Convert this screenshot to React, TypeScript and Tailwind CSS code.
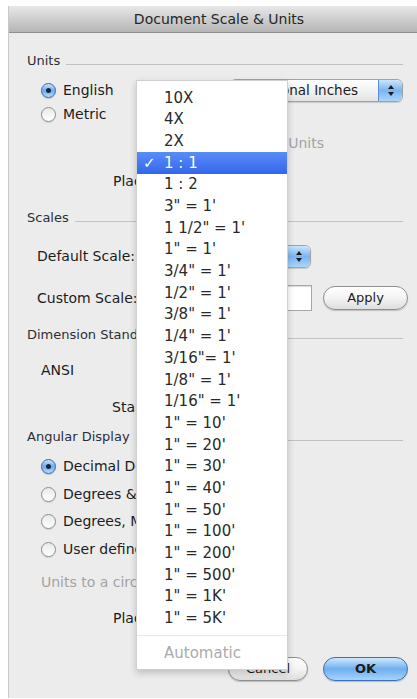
import clsx from "clsx";
import type { ReactNode } from "react";

const scales = [
  "10X",
  "4X",
  "2X",
  "1 : 1",
  "1 : 2",
  `3" = 1'`,
  `1 1/2" = 1'`,
  `1" = 1'`,
  `3/4" = 1'`,
  `1/2" = 1'`,
  `3/8" = 1'`,
  `1/4" = 1'`,
  `3/16"= 1'`,
  `1/8" = 1'`,
  `1/16" = 1'`,
  `1" = 10'`,
  `1" = 20'`,
  `1" = 30'`,
  `1" = 40'`,
  `1" = 50'`,
  `1" = 100'`,
  `1" = 200'`,
  `1" = 500'`,
  `1" = 1K'`,
  `1" = 5K'`,
];

function Radio({ on }: { on?: boolean }) {
  if (on) {
    return (
      <span className="flex h-[15px] w-[15px] shrink-0 items-center justify-center rounded-full border border-[#3b68a6] bg-linear-to-b from-[#c9e3fb] via-[#6cacee] to-[#b3dbfc] shadow-[0_1px_1px_rgba(0,0,0,0.2)]">
        <span className="h-[5px] w-[5px] rounded-full bg-[#17263a]" />
      </span>
    );
  }
  return (
    <span className="h-[15px] w-[15px] shrink-0 rounded-full border border-[#8d8d8d] bg-linear-to-b from-[#e9e9e9] to-white shadow-[0_1px_1px_rgba(0,0,0,0.12)]" />
  );
}

function RadioRow({ on, children }: { on?: boolean; children: ReactNode }) {
  return (
    <div className="flex h-[27.5px] items-center gap-[7px] pl-[14px]">
      <Radio on={on} />
      <span>{children}</span>
    </div>
  );
}

function Section({ label }: { label: string }) {
  return (
    <div className="flex h-[16px] items-center gap-[6px] text-[13px] text-[#2b2f38]">
      <span>{label}</span>
      <span className="mt-[6px] h-px flex-1 bg-[#c2c2c2]" />
    </div>
  );
}

function Arrows() {
  return (
    <span className="flex w-[24px] flex-col items-center justify-center gap-[3px] rounded-r-[6px] border-l border-[#5b8ccc] bg-linear-to-b from-[#cbe5fc] via-[#78b5f0] to-[#aad5fb]">
      <span className="h-0 w-0 border-x-[3px] border-b-[4px] border-x-transparent border-b-[#1b1b1b]" />
      <span className="h-0 w-0 border-x-[3px] border-t-[4px] border-x-transparent border-t-[#1b1b1b]" />
    </span>
  );
}

function Popup({ text, className }: { text?: string; className?: string }) {
  return (
    <div
      className={clsx(
        "flex h-[23px] items-stretch rounded-[6px] border border-[#a2a2a2] bg-linear-to-b from-white to-[#e4e4e4] shadow-[0_1px_1px_rgba(0,0,0,0.15)]",
        className,
      )}
    >
      <span className="flex flex-1 items-center justify-end pr-[20px] text-[13.5px]">{text}</span>
      <Arrows />
    </div>
  );
}

function Button({ children, primary, className }: { children: ReactNode; primary?: boolean; className?: string }) {
  return (
    <button
      className={clsx(
        "flex h-[24px] items-center justify-center rounded-full border text-[13px] shadow-[0_1px_1px_rgba(0,0,0,0.2)]",
        primary
          ? "border-[#3c6fb4] bg-linear-to-b from-[#d0e8fc] via-[#6eaef0] to-[#a6d3fb] font-bold"
          : "border-[#8f8f8f] bg-linear-to-b from-white via-[#f3f3f3] to-[#dedede]",
        className,
      )}
    >
      {children}
    </button>
  );
}

function ScaleMenu() {
  return (
    <div className="absolute left-[127px] top-[74px] flex w-[152px] flex-col border border-[#d0d0d0] bg-white pt-[6px] pb-[5px] text-[15px] text-[#2a2a2a] shadow-[0_3px_7px_rgba(0,0,0,0.2)]">
      {scales.map((s) => {
        const selected = s === "1 : 1";
        return (
          <div
            key={s}
            className={clsx(
              "flex h-[21.7px] items-center",
              selected && "bg-linear-to-b from-[#5a8cf6] to-[#3466ec] text-white",
            )}
          >
            <span className="w-[27px] pl-[6px] text-[15px] font-bold">{selected ? "✓" : ""}</span>
            <span className="whitespace-pre">{s}</span>
          </div>
        );
      })}
      <div className="my-[6px] h-px bg-[#e6e6e6]" />
      <div className="flex h-[21.7px] items-center pl-[27px] text-[#ababab]">Automatic</div>
    </div>
  );
}

export default function App() {
  return (
    <div className="min-h-screen bg-white pl-[8px] pt-[6px] font-['DejaVu_Sans',sans-serif] text-[14px] text-[#1c1c1c]">
      <div className="relative flex h-[692px] w-[409px] flex-col border-l border-[#c9c9c9] bg-[#ececec]">
        <div className="flex h-[27px] items-center justify-center border-b border-[#8f8f8f] bg-linear-to-b from-[#e8e8e8] to-[#b5b5b5] pl-[12px] text-[14px] text-[#262626]">
          Document Scale &amp; Units
        </div>

        <div className="flex flex-col pl-[18px] pr-[14px] pt-[20px]">
          <Section label="Units" />

          <div className="mt-[9px] flex h-[24px] items-center">
            <div className="flex items-center gap-[7px] pl-[14px]">
              <Radio on />
              <span>English</span>
            </div>
            <Popup text="Fractional Inches" className="ml-auto w-[173px]" />
          </div>
          <div className="flex h-[24px] items-center gap-[7px] pl-[14px]">
            <Radio />
            <span>Metric</span>
          </div>
          <div className="mt-[5px] flex h-[24px] items-center pl-[219px] text-[#a3a3a3]">Show Units</div>
          <div className="mt-[14px] flex h-[24px] items-center gap-[8px] pl-[86px]">
            <span>Places:</span>
            <Popup className="w-[70px]" />
          </div>

          <div className="mt-[17px]">
            <Section label="Scales" />
          </div>
          <div className="mt-[17px] flex h-[26px] items-center pl-[10px]">
            <span>Default Scale:</span>
            <Popup className="ml-auto mr-[92px] w-[120px]" />
          </div>
          <div className="mt-[16px] flex h-[26px] items-center pl-[10px]">
            <span>Custom Scale:</span>
            <div className="ml-auto h-[26px] w-[64px] border border-[#a8a8a8] bg-white shadow-[inset_0_1px_1px_rgba(0,0,0,0.15)]" />
            <Button className="-mr-[5px] ml-[11px] w-[85px]">Apply</Button>
          </div>

          <div className="mt-[16px]">
            <Section label="Dimension Standards" />
          </div>
          <div className="mt-[15px] flex h-[24px] items-center pl-[14px]">ANSI</div>
          <div className="mt-[13px] flex h-[24px] items-center pl-[85px]">Standard:</div>

          <div className="mt-[10px]">
            <Section label="Angular Display" />
          </div>
          <div className="mt-[8px] flex flex-col">
            <RadioRow on>Decimal Degrees</RadioRow>
            <RadioRow>Degrees &amp; Minutes</RadioRow>
            <RadioRow>Degrees, Minutes, Seconds</RadioRow>
            <RadioRow>User defined</RadioRow>
          </div>
          <div className="mt-[7px] flex h-[24px] items-center pl-[14px] text-[#a3a3a3]">Units to a circle:</div>
          <div className="mt-[12px] flex h-[24px] items-center pl-[86px]">Places:</div>

          <div className="mt-[26px] flex h-[26px] items-center justify-end gap-[15px]">
            <Button className="w-[80px]">Cancel</Button>
            <Button primary className="-mr-[5px] w-[85px]">
              OK
            </Button>
          </div>
        </div>

        <ScaleMenu />
      </div>
    </div>
  );
}
